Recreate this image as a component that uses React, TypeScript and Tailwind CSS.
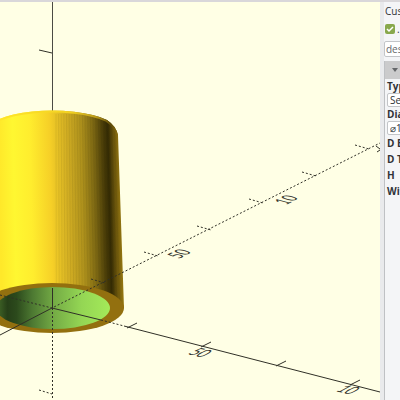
const ribs = Array.from({ length: 23 }, (_, i) => {
  const t = 0.06 + i * 0.04;
  return {
    top: 52 + t * 66,
    bottom: 52 + t * 72,
    y: 309 - 25 * Math.sqrt(1 - t * t),
  };
});

const ticks = [
  "M39 48 52 51",
  "M127 326 137 321",
  "M201 345 211 340",
  "M276 364 286 359",
  "M350 383 360 378",
];

const dottedTicks = [
  "M91 277 105 281",
  "M144 250 158 254",
  "M197 224 211 228",
  "M249 197 263 201",
  "M302 170 316 174",
  "M355 143 369 147",
  "M39 388 52 392",
];

const axisLabels = [
  { text: "50", transform: "translate(187 352) rotate(14) skewX(-48)" },
  { text: "10", transform: "translate(335 389) rotate(14) skewX(-48)" },
  { text: "50", transform: "translate(179 257) rotate(-27) skewX(48)" },
  { text: "10", transform: "translate(286 203) rotate(-27) skewX(48)" },
];

function Viewport() {
  return (
    <svg
      className="h-full w-full bg-[#ffffe5]"
      viewBox="0 0 380 398"
      preserveAspectRatio="xMinYMin slice"
      role="img"
      aria-label="Tube preview"
    >
      <defs>
        <linearGradient id="side" gradientUnits="userSpaceOnUse" x1="0" y1="210" x2="122" y2="207">
          <stop offset="0" stopColor="#ffe82a" />
          <stop offset="0.12" stopColor="#fff731" />
          <stop offset="0.26" stopColor="#ffed2e" />
          <stop offset="0.42" stopColor="#f6d027" />
          <stop offset="0.56" stopColor="#d2ae23" />
          <stop offset="0.68" stopColor="#ae911c" />
          <stop offset="0.78" stopColor="#7d6813" />
          <stop offset="0.86" stopColor="#493c08" />
          <stop offset="0.9" stopColor="#342b04" />
          <stop offset="0.94" stopColor="#64500b" />
          <stop offset="1" stopColor="#9b7c12" />
        </linearGradient>
        <linearGradient id="bore">
          <stop offset="0" stopColor="#456b29" />
          <stop offset="0.1" stopColor="#263f18" />
          <stop offset="0.18" stopColor="#2c4a1c" />
          <stop offset="0.32" stopColor="#4d7932" />
          <stop offset="0.52" stopColor="#76ae46" />
          <stop offset="0.75" stopColor="#94d654" />
          <stop offset="1" stopColor="#a4ea59" />
        </linearGradient>
        <linearGradient id="rim" gradientUnits="userSpaceOnUse" x1="0" y1="0" x2="118" y2="0">
          <stop offset="0" stopColor="#ffe529" />
          <stop offset="0.6" stopColor="#f3d222" />
          <stop offset="0.82" stopColor="#b89818" />
          <stop offset="0.94" stopColor="#5e4b09" />
          <stop offset="1" stopColor="#8a6e10" />
        </linearGradient>
        <clipPath id="body">
          <path d="M-14 130A66 21 0 0 1 107 118Q116 124 118 133L124 306V340H-20Z" />
        </clipPath>
      </defs>

      <path d="M52.5 0V110" stroke="#4b4b43" />
      <g clipPath="url(#body)">
        <path d="M-20 100H130V306H-20Z" fill="url(#side)" />
        <g stroke="#2e2500" strokeOpacity="0.07">
          {ribs.map((rib) => (
            <path key={rib.top} d={`M${rib.top} 112L${rib.bottom} ${rib.y}`} />
          ))}
        </g>
        <path d="M-14 130A66 21 0 0 1 107 118Q116 124 118 133" fill="none" stroke="url(#rim)" strokeWidth="4" />
      </g>
      <ellipse cx="52" cy="306" rx="72" ry="25" fill="#93700f" />
      <ellipse cx="53" cy="306" rx="57" ry="21" fill="url(#bore)" />

      <g fill="none" stroke="#303027">
        <path d="M52.5 286V306M0 333 52 306 101 318M124 324 380 390" />
        <path strokeDasharray="2 2" d="M52.5 306V398M0 293 52 306 380 141M101 318 124 324" />
        {ticks.map((d) => (
          <path key={d} d={d} />
        ))}
        {dottedTicks.map((d) => (
          <path key={d} d={d} strokeDasharray="2 2" />
        ))}
        <path d="M376 144 380 147M377 150 380 148" />
      </g>
      <g className="font-['Lato'] text-[13px]" fill="#34342c">
        {axisLabels.map((label) => (
          <text key={label.transform} transform={label.transform}>
            {label.text}
          </text>
        ))}
      </g>
    </svg>
  );
}

function Customizer() {
  return (
    <aside className="flex w-4 shrink-0 flex-col overflow-hidden bg-[#f4f5f7] text-[10px] leading-4 whitespace-nowrap text-[#303337]">
      <h2 className="pt-px pl-px">Cus</h2>
      <label className="flex h-5 items-center gap-0.5 pl-px">
        <span className="relative flex">
          <input
            type="checkbox"
            defaultChecked
            className="size-2.5 appearance-none rounded-xs bg-[#88a84d]"
          />
          <svg className="pointer-events-none absolute inset-0 size-2.5" viewBox="0 0 10 10" fill="none" stroke="white" strokeWidth="1.5">
            <path d="M2 5 4 7 8 3" />
          </svg>
        </span>
        .
      </label>
      <select
        aria-label="Preset"
        className="mt-0.5 block h-4 w-36 shrink-0 appearance-none rounded-xs border border-[#c3c5c8] bg-white px-px leading-3.5 text-[#66686b]"
      >
        <option>des</option>
      </select>
      <section className="mt-1 w-40 flex-1 border-l border-[#bfc1c4]">
        <button type="button" aria-label="Collapse parameters" className="flex h-4.5 w-full items-center bg-[#cbcbcc] px-1.5">
          <svg className="h-1 w-2" viewBox="0 0 8 4" fill="#65676a">
            <path d="M1 0H7L4 4Z" />
          </svg>
        </button>
        <div className="pl-0.5">
          <label htmlFor="type" className="block h-3.5 font-bold leading-3.5">Typ</label>
          <select id="type" className="block h-3.5 w-32 appearance-none rounded-xs border border-[#c3c5c8] bg-white px-0.5 leading-3">
            <option>Se</option>
          </select>
          <label htmlFor="diameter" className="block h-3.5 font-bold leading-3.5">Dia</label>
          <select id="diameter" className="block h-3.5 w-32 appearance-none rounded-xs border border-[#c3c5c8] bg-white px-0.5 leading-3">
            <option>⌀1</option>
          </select>
          <p className="font-bold">D E</p>
          <p className="font-bold">D T</p>
          <p className="font-bold">H</p>
          <p className="font-bold">Wit</p>
        </div>
      </section>
    </aside>
  );
}

export default function App() {
  return (
    <div className="flex h-screen flex-col overflow-hidden bg-[#f4f5f7] font-['Open_Sans','Noto_Sans',sans-serif]">
      <div className="h-0.5 shrink-0 bg-[#d9d7da]" />
      <div className="flex min-h-0 flex-1">
        <main className="min-w-0 flex-1">
          <Viewport />
        </main>
        <div className="w-1 shrink-0 bg-[#e9eaec]" />
        <Customizer />
      </div>
    </div>
  );
}
